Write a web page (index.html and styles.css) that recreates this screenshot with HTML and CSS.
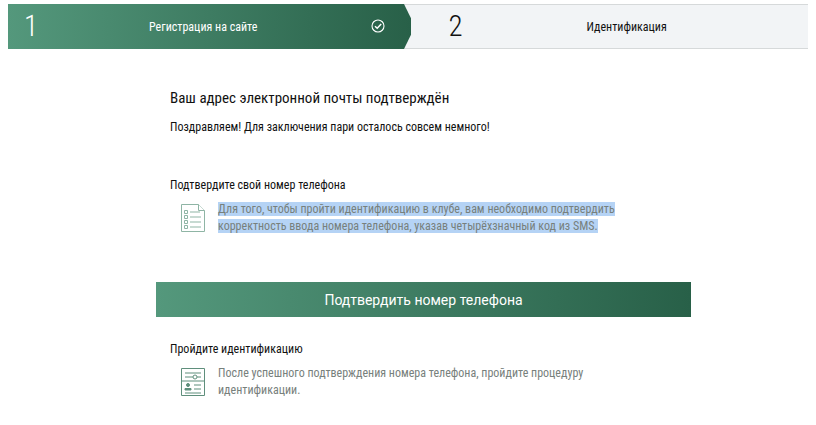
FILE: index.html
```html
<!DOCTYPE html>
<html lang="ru">
<head>
    <meta charset="UTF-8">
    <meta name="viewport" content="width=device-width, initial-scale=1.0">
    <title>Идентификация</title>
    <link rel="stylesheet" href="styles.css">
</head>
<body>
    <div class="steps">
        <div class="step step-done">
            <span class="step-num">1</span>
            <span class="step-name">Регистрация на сайте</span>
            <svg class="step-check" width="14" height="14" viewBox="0 0 14 14" fill="none" stroke="#fff">
                <circle cx="7" cy="7" r="6" stroke-width="1.1"/>
                <path d="M4 7.2l2.2 2.1L10.2 5" stroke-width="1.5"/>
            </svg>
        </div>
        <div class="step step-next">
            <span class="step-num">2</span>
            <span class="step-name">Идентификация</span>
        </div>
    </div>

    <div class="content">
        <div class="intro">
            <h1>Ваш адрес электронной почты подтверждён</h1>
            <p>Поздравляем! Для заключения пари осталось совсем немного!</p>
        </div>

        <div class="block block-phone">
            <h2>Подтвердите свой номер телефона</h2>
            <div class="block-body">
                <svg class="block-icon" width="26" height="30" viewBox="0 0 26 30" fill="#fff" stroke="#8fb5a5">
                    <path d="M1.5 1.5h17l6 6v21h-23z"/>
                    <path d="M18.5 1.5v6h6"/>
                    <path d="M10 9h10M10 14h11M10 19h11M10 24h11"/>
                    <path d="M4.5 7.5h3v3h-3zM4.5 12.5h3v3h-3zM4.5 17.5h3v3h-3zM4.5 22.5h3v3h-3z"/>
                </svg>
                <p><span class="selected">Для того, чтобы пройти идентификацию в клубе, вам необходимо подтвердить<br>корректность ввода номера телефона, указав четырёхзначный код из SMS.</span></p>
            </div>
        </div>

        <button class="confirm">Подтвердить номер телефона</button>

        <div class="block">
            <h2>Пройдите идентификацию</h2>
            <div class="block-body">
                <svg class="block-icon" width="26" height="30" viewBox="0 0 26 30" fill="#fff" stroke="#5f8f7c">
                    <path d="M1.5 1.5h23v27h-23z"/>
                    <path d="M5 6h16M5 10h8M17 10h4M1.5 14h23"/>
                    <circle cx="15" cy="10" r="2"/>
                    <circle cx="8" cy="18" r="1.5" fill="#5f8f7c"/>
                    <path d="M5 23h6v-1.500h-6z" fill="#5f8f7c"/>
                    <path d="M14 18h7M14 22h7M5 26h16"/>
                </svg>
                <p>После успешного подтверждения номера телефона, пройдите процедуру<br>идентификации.</p>
            </div>
        </div>
    </div>
</body>
</html>
```

FILE: styles.css
```css
body {
    margin: 0;
    padding: 4px 8px 0;
    background-color: #fff;
    font-family: Roboto, "Liberation Sans", sans-serif;
    font-stretch: 85%;
    color: #111;
    overflow: hidden;
}
.steps {
    display: flex;
    height: 45px;
    background-color: #f2f4f6;
    border-top: 1px solid #d6d9da;
    border-bottom: 1px solid #d6d9da;
    box-sizing: border-box;
}
.step {
    position: relative;
    display: flex;
    align-items: center;
    width: 400px;
}
.step-done {
    width: 407px;
    margin: -1px 0;
    color: #fff;
    background: linear-gradient(90deg, #54987c, #286048);
    clip-path: polygon(0 0, 396px 0, 407px 50%, 396px 100%, 0 100%);
}
.step-num {
    font-size: 29px;
    font-weight: 300;
    line-height: 1;
}
.step-done .step-num {
    margin-left: 16px;
    width: 125px;
}
.step-next .step-num {
    margin-left: 37px;
    width: 138px;
}
.step-name {
    font-size: 12px;
    white-space: nowrap;
}
.step-check {
    position: absolute;
    left: 363px;
    top: 15px;
}
.content {
    width: 535px;
    margin-left: 148px;
}
.intro {
    padding: 39px 14px 0;
}
h1 {
    margin: 0;
    font-size: 15px;
    font-weight: 400;
    line-height: 20px;
}
.intro p {
    margin: 11px 0 0;
    font-size: 12px;
    line-height: 16px;
}
.block {
    padding: 0 14px;
}
.block-phone {
    margin-top: 42px;
    height: 105px;
}
h2 {
    margin: 0;
    font-size: 12px;
    font-weight: 400;
    line-height: 16px;
}
.block-body {
    display: flex;
    align-items: flex-start;
    margin-top: 8px;
}
.block-icon {
    flex: none;
    margin: 2px 0 0 10px;
}
.block-body p {
    margin: 0 0 0 12px;
    font-size: 12px;
    line-height: 17px;
    color: #77807c;
    white-space: nowrap;
}
.selected {
    background-color: #b5d3f5;
}
.confirm {
    display: block;
    width: 535px;
    height: 35px;
    margin-bottom: 24px;
    padding: 0;
    border: none;
    background: linear-gradient(90deg, #54987c, #286048);
    color: #fff;
    font-family: inherit;
    font-size: 14px;
    cursor: pointer;
}
```
